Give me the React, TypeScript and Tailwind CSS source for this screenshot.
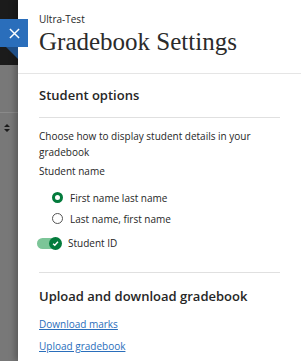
import React from 'react';

function Radio({ checked, label }: { checked?: boolean; label: string }) {
  return (
    <label className="flex items-center gap-[7px] h-[21px] pl-[13px] shrink-0">
      {checked ? (
        <span className="w-[11px] h-[11px] rounded-full border-[3px] border-[#037b3c] bg-white" />
      ) : (
        <span className="w-[11px] h-[11px] rounded-full border border-[#555] bg-white" />
      )}
      <span>{label}</span>
    </label>
  );
}

export default function App() {
  return (
    <div
      className="relative w-[301px] h-[361px] flex overflow-hidden bg-white text-[#262626]"
      style={{ fontFamily: '"Open Sans", "Noto Sans", sans-serif' }}
    >
      {/* background page strip */}
      <div className="w-[18px] flex flex-col shrink-0">
        <div className="h-[65px] bg-[#1b1b1b] shrink-0" />
        <div className="flex-1 bg-[#787878] flex flex-col">
          <div className="h-[48px] border-b border-[#8a8a8a] shrink-0" />
          {/* sort arrows */}
          <svg className="mt-[11px] ml-[4px]" width="6" height="8" viewBox="0 0 6 8" fill="#1a1a1a">
            <path d="M3 0 L6 3 L0 3 Z M0 5 L6 5 L3 8 Z" />
          </svg>
        </div>
      </div>

      {/* close button */}
      <button className="absolute left-0 top-[19px] w-[28px] h-[28px] bg-[#2a6ebb] flex items-center justify-center">
        <svg width="11" height="11" viewBox="0 0 12 12" stroke="white" strokeWidth="1.6">
          <path d="M1 1 L11 11 M11 1 L1 11" />
        </svg>
      </button>
      <div className="absolute left-[6px] top-[47px] w-0 h-0 border-t-[12px] border-t-[#1f4e86] border-l-[12px] border-l-transparent" />

      {/* panel */}
      <div className="flex-1 flex flex-col shadow-[-3px_0_6px_rgba(0,0,0,0.25)]">
        <div className="shrink-0 pl-[21px] pt-[12px] h-[74px] border-b border-[#e5e5e5]">
          <div className="text-[10px] leading-[14px]">Ultra-Test</div>
          <div
            className="text-[25px] leading-[30px] mt-[1px] text-[#2b2b2b]"
            style={{ fontFamily: '"Liberation Serif", "DejaVu Serif", serif' }}
          >
            Gradebook Settings
          </div>
        </div>

        <div className="shrink-0 pl-[21px] pr-[21px] flex flex-col">
          <div className="shrink-0 h-[44px] flex items-center text-[13px] font-semibold border-b border-[#e0e0e0]">
            Student options
          </div>
          <div className="shrink-0 pt-[10px] text-[10px] leading-[16px] flex flex-col">
            <p>Choose how to display student details in your gradebook</p>
            <p className="mt-[3px]">Student name</p>
            <div className="mt-[8px] flex flex-col">
              <Radio checked label="First name last name" />
              <Radio label="Last name, first name" />
            </div>
            <div className="mt-[4px] flex items-center gap-[7px] h-[20px] -ml-[2px]">
              <div className="relative w-[24px] h-[11px] rounded-full bg-[#7cc598]">
                <div className="absolute -right-[1px] -top-[1px] w-[13px] h-[13px] rounded-full bg-[#037b3c] flex items-center justify-center">
                  <svg width="7" height="7" viewBox="0 0 8 8" fill="none" stroke="white" strokeWidth="1.6">
                    <path d="M1.2 4.2 L3.2 6 L6.8 2" />
                  </svg>
                </div>
              </div>
              <span>Student ID</span>
            </div>
          </div>
          <div className="shrink-0 mt-[19px] border-t border-[#e0e0e0]" />
          <div className="shrink-0 mt-[13px] text-[13px] leading-[20px] font-semibold">
            Upload and download gradebook
          </div>
          <div className="shrink-0 mt-[7px] text-[10px] leading-[22px] flex flex-col items-start">
            <a className="text-[#2a6ebb] underline">Download marks</a>
            <a className="text-[#2a6ebb] underline">Upload gradebook</a>
          </div>
        </div>
      </div>
    </div>
  );
}
